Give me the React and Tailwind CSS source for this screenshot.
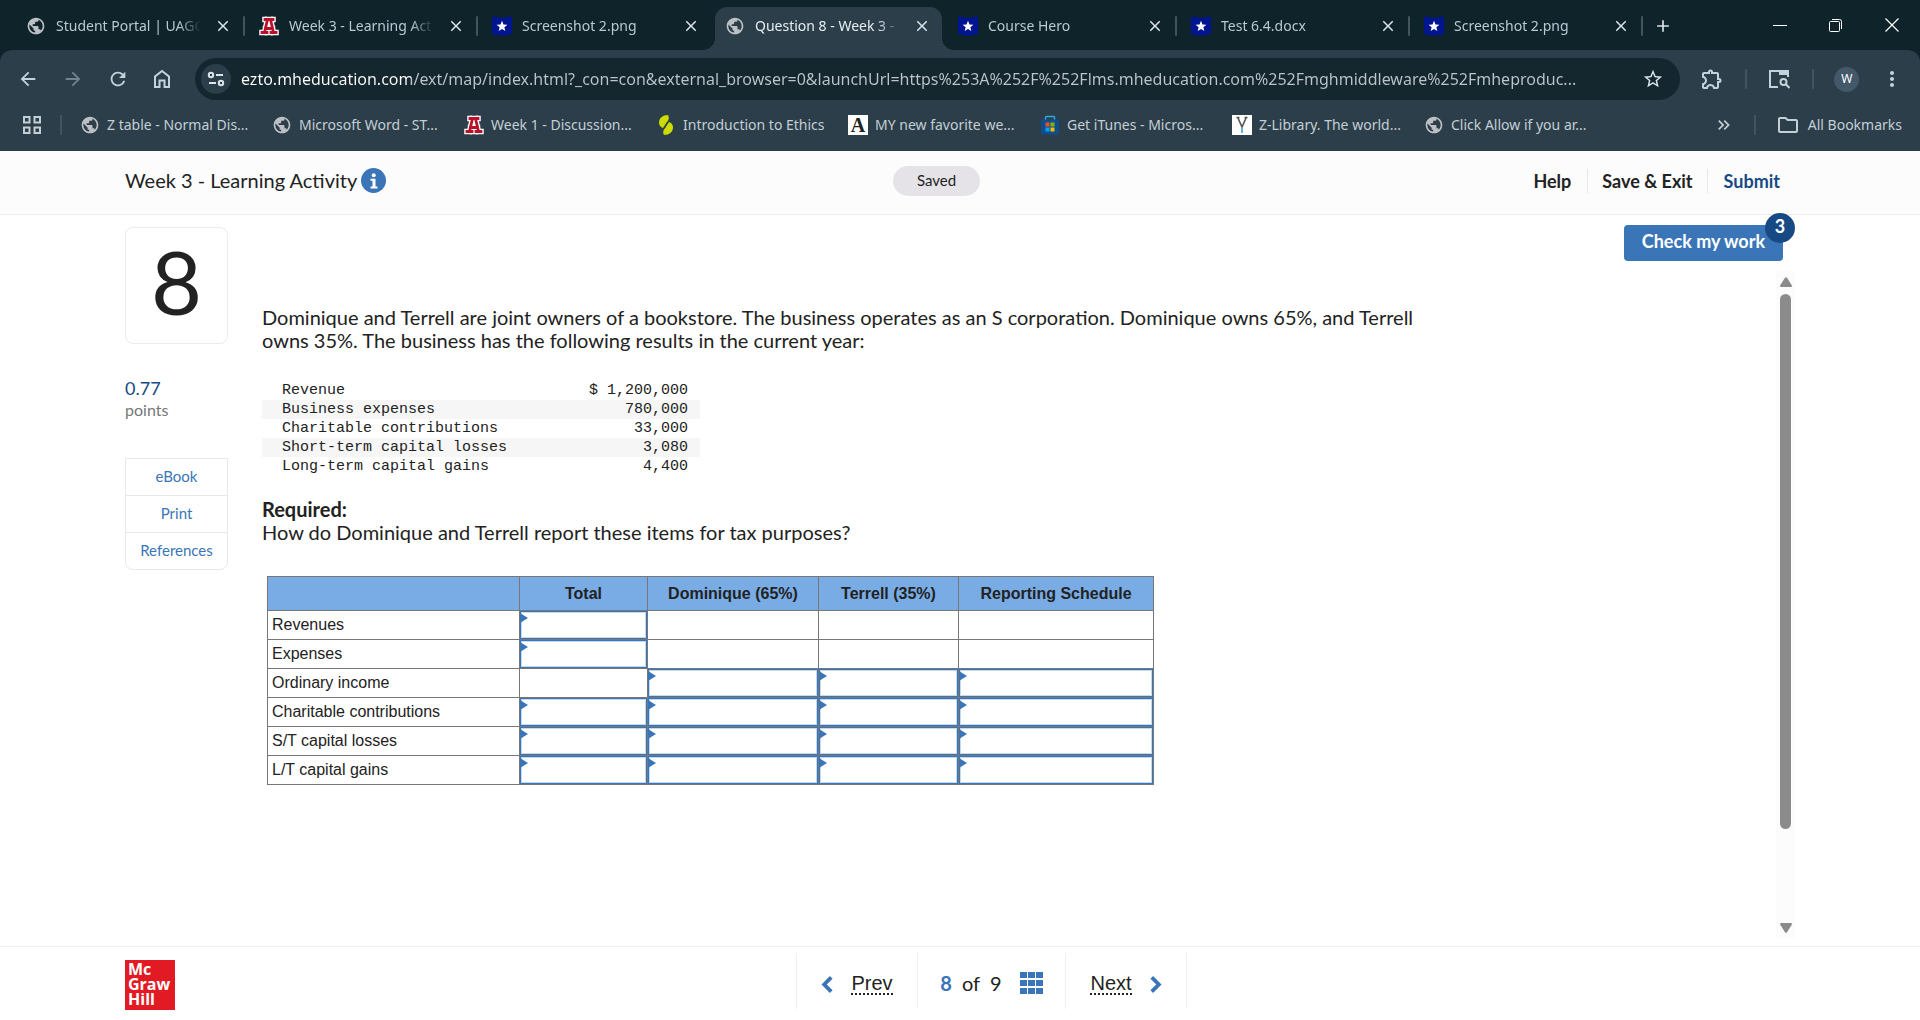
import clsx from 'clsx';
import {
  MdAdd,
  MdArrowBack,
  MdArrowForward,
  MdClose,
  MdKeyboardDoubleArrowRight,
  MdMoreVert,
  MdOutlineExtension,
  MdOutlineFolder,
  MdPublic,
  MdRefresh,
  MdStarBorder,
} from 'react-icons/md';

const tabs = [
  { icon: 'globe', title: 'Student Portal | UAGC' },
  { icon: 'arizona', title: 'Week 3 - Learning Act' },
  { icon: 'hero', title: 'Screenshot 2.png' },
  { icon: 'globe', title: 'Question 8 - Week 3 -', active: true },
  { icon: 'hero', title: 'Course Hero' },
  { icon: 'hero', title: 'Test 6.4.docx' },
  { icon: 'hero', title: 'Screenshot 2.png' },
];

const bookmarks = [
  { icon: 'globe', title: 'Z table - Normal Dis...' },
  { icon: 'globe', title: 'Microsoft Word - ST...' },
  { icon: 'arizona', title: 'Week 1 - Discussion...' },
  { icon: 'sophia', title: 'Introduction to Ethics' },
  { icon: 'letterA', title: 'MY new favorite we...' },
  { icon: 'store', title: 'Get iTunes - Micros...' },
  { icon: 'letterY', title: 'Z-Library. The world...' },
  { icon: 'globe', title: 'Click Allow if you ar...' },
];

const results = [
  ['Revenue', '$ 1,200,000'],
  ['Business expenses', '780,000'],
  ['Charitable contributions', '33,000'],
  ['Short-term capital losses', '3,080'],
  ['Long-term capital gains', '4,400'],
];

const columns = ['Total', 'Dominique (65%)', 'Terrell (35%)', 'Reporting Schedule'];

// 1 = the student can type in this cell
const answerRows = [
  { label: 'Revenues', cells: [1, 0, 0, 0] },
  { label: 'Expenses', cells: [1, 0, 0, 0] },
  { label: 'Ordinary income', cells: [0, 1, 1, 1], total: true },
  { label: 'Charitable contributions', cells: [1, 1, 1, 1] },
  { label: 'S/T capital losses', cells: [1, 1, 1, 1] },
  { label: 'L/T capital gains', cells: [1, 1, 1, 1] },
];

const url =
  'ezto.mheducation.com/ext/map/index.html?_con=con&external_browser=0&launchUrl=https%253A%252F%252Flms.mheducation.com%252Fmghmiddleware%252Fmheproduc...';

const arizonaShape = 'M6 3.500h8M8.500 3.500L5.500 16.500M11.500 3.500l3 13M3 16.500h5M12 16.500h5M6.500 12.500h7';

function Favicon({ name }) {
  switch (name) {
    case 'arizona':
      return (
        <svg viewBox="0 0 20 20" className="size-5 shrink-0" fill="none">
          <path d={arizonaShape} stroke="#fff" strokeWidth="5.500" strokeLinecap="square" />
          <path d={arizonaShape} stroke="#b8132b" strokeWidth="2.800" strokeLinecap="square" />
        </svg>
      );
    case 'hero':
      return (
        <svg viewBox="0 0 20 20" className="size-5 shrink-0">
          <path d="M0 0.500l10 1.500 10-1.500v17.500l-10 2-10-2z" fill="#00158f" />
          <path d="M10 4.800l1.500 3.600 3.900.3-3 2.500.9 3.800-3.300-2-3.300 2 .9-3.800-3-2.500 3.900-.3z" fill="#fff" />
        </svg>
      );
    case 'sophia':
      return (
        <svg viewBox="0 0 20 20" className="size-5 shrink-0">
          <path d="M12 0C6.500 0 3 3.500 3 7.500c0 2.800 1.600 4.800 4 5.500L11.500 4.500z" fill="#cddc00" />
          <path d="M8 20c5.500 0 9-3.500 9-7.500 0-2.800-1.600-4.800-4-5.500L8.500 15.500z" fill="#cddc00" />
          <path d="M12 0c1.500 2.500 1 5-1.500 7.500L7 13M8 20c-1.500-2.500-1-5 1.500-7.500L13 7" fill="#cddc00" />
        </svg>
      );
    case 'letterA':
      return (
        <span className="flex size-5 shrink-0 items-center justify-center bg-white font-['Liberation_Serif',serif] text-xl font-bold text-[#222]">
          A
        </span>
      );
    case 'letterY':
      return (
        <svg viewBox="0 0 20 20" className="size-5 shrink-0">
          <path d="M0 0h20v20H0z" fill="#fff" />
          <path d="M6 3l4 9 4-9M4.500 2.500h3M12.500 2.500h3" stroke="#555" strokeWidth="1.600" fill="none" />
          <path d="M10 13v5" stroke="#5bb8d6" strokeWidth="2" />
        </svg>
      );
    case 'store':
      return (
        <svg viewBox="0 0 20 20" className="size-5 shrink-0">
          <path d="M5.500 5V2.500a1 1 0 0 1 1-1h7a1 1 0 0 1 1 1V5" stroke="#2fa9e0" strokeWidth="1.500" fill="none" />
          <path d="M1 4.500h18V17a2.500 2.500 0 0 1-2.500 2.500h-13A2.500 2.500 0 0 1 1 17z" fill="#104d8d" />
          <path d="M5.500 7.500h4v4h-4z" fill="#f25022" />
          <path d="M10.500 7.500h4v4h-4z" fill="#7fba00" />
          <path d="M5.500 12.500h4v4h-4z" fill="#00a4ef" />
          <path d="M10.500 12.500h4v4h-4z" fill="#ffb900" />
        </svg>
      );
    default:
      return <MdPublic className="size-5 shrink-0 stroke-current text-[#bcc0c4]" />;
  }
}

function HomeIcon() {
  return (
    <svg viewBox="0 0 20 20" className="size-5" fill="none" stroke="currentColor" strokeWidth="2">
      <path d="M3 18V7.500L10 2l7 5.500V18h-4.500v-6.500h-5V18z" />
    </svg>
  );
}

function SiteIcon() {
  return (
    <svg viewBox="0 0 18 18" className="size-[18px]" fill="none" stroke="currentColor" strokeWidth="2">
      <circle cx="4" cy="5" r="2.200" />
      <path d="M9 5h7M2 13h7" />
      <circle cx="14" cy="13" r="2.200" />
    </svg>
  );
}

function TabSearchIcon() {
  return (
    <svg viewBox="0 0 24 24" className="size-6" fill="none" stroke="currentColor" strokeWidth="2">
      <path d="M11 20H3V4h18v6" />
      <path d="M12 3h9.500v5H12z" fill="currentColor" stroke="none" />
      <circle cx="16.500" cy="15" r="3" />
      <path d="M18.800 17.300L22.500 21" />
    </svg>
  );
}

function AppsIcon() {
  return (
    <svg viewBox="0 0 20 20" className="size-5" fill="none" stroke="currentColor" strokeWidth="2">
      <path d="M2 2h5.500v5.500H2zM12.500 2H18v5.500h-5.500zM2 12.500h5.500V18H2zM12.500 12.500H18V18h-5.500z" />
    </svg>
  );
}

function Divider() {
  return <span className="h-5 w-0.5 shrink-0 rounded bg-[#43545f]" />;
}

function Tab({ tab, divider }) {
  return (
    <div className={clsx('relative flex h-[43px] max-w-[233px] min-w-0 flex-1 items-center', tab.active && 'pr-0.5 pl-1')}>
      <div
        className={clsx(
          'relative flex h-full min-w-0 flex-1 items-center gap-2.5 pr-2 pb-1.5',
          tab.active ? 'rounded-t-xl bg-[#2c3e4a] pl-2.5 text-[#e6edf1]' : 'pl-3.5 text-[#b9c9d3]'
        )}
      >
        <Favicon name={tab.icon} />
        <a
          href="#"
          className="min-w-0 flex-1 overflow-hidden text-sm whitespace-nowrap [mask-image:linear-gradient(to_right,#000_84%,transparent)]"
        >
          {tab.title}
        </a>
        <button type="button" aria-label="Close tab" className="flex size-6 items-center justify-center text-[#dbe5eb]">
          <MdClose className="size-[18px]" />
        </button>
        {tab.active && (
          <>
            <span className="absolute bottom-0 -left-3 size-3 bg-[radial-gradient(circle_at_0_0,transparent_12px,#2c3e4a_12px)]" />
            <span className="absolute -right-3 bottom-0 size-3 bg-[radial-gradient(circle_at_100%_0,transparent_12px,#2c3e4a_12px)]" />
          </>
        )}
      </div>
      {divider && <span className="flex pb-1.5"><Divider /></span>}
    </div>
  );
}

function Browser() {
  return (
    <div className="bg-[#0f232b] font-['Noto_Sans',sans-serif] text-[#c3ced5]">
      {/* Tab strip */}
      <div className="flex h-[50px] items-end">
        <div className="flex min-w-0 flex-1 items-center pl-3">
          {tabs.map((tab, i) => (
            <Tab key={i} tab={tab} divider={![2, 3].includes(i)} />
          ))}
          <button type="button" aria-label="New tab" className="ml-1.5 px-1 pb-1.5 text-[#dbe5eb]">
            <MdAdd className="size-5" />
          </button>
        </div>
        <div className="flex h-full items-center text-white">
          <button type="button" aria-label="Minimize" className="flex w-14 justify-center">
            <span className="h-px w-3.5 bg-white" />
          </button>
          <button type="button" aria-label="Restore" className="flex w-14 justify-center">
            <svg viewBox="0 0 14 14" className="size-3.5" fill="none" stroke="currentColor">
              <rect x="0.500" y="3.500" width="10" height="10" rx="1" />
              <path d="M3 1.500h7.500a2 2 0 0 1 2 2V11" />
            </svg>
          </button>
          <button type="button" aria-label="Close window" className="flex w-14 justify-center">
            <svg viewBox="0 0 14 14" className="size-3.5" stroke="currentColor" strokeWidth="1.200">
              <path d="M.5.500l13 13M13.500.500l-13 13" />
            </svg>
          </button>
        </div>
      </div>

      <div className="rounded-t-xl bg-[#2c3e4a] pb-2.5">
        {/* Address bar */}
        <div className="flex h-[58px] items-center pr-4 pl-[13px]">
          <div className="flex w-[182px] shrink-0 gap-[15px] text-[#c3d3dc]">
            <button type="button" aria-label="Back" className="p-1"><MdArrowBack className="size-[22px]" /></button>
            <button type="button" aria-label="Forward" className="p-1 text-[#72838e]"><MdArrowForward className="size-[22px]" /></button>
            <button type="button" aria-label="Reload" className="p-1"><MdRefresh className="size-[22px]" /></button>
            <button type="button" aria-label="Home" className="p-1"><HomeIcon /></button>
          </div>
          <div className="flex h-[42px] min-w-0 flex-1 items-center rounded-full bg-[#14272f] pr-4 pl-1.5">
            <button type="button" aria-label="Site information" className="flex size-[30px] shrink-0 items-center justify-center rounded-full bg-[#2c3e4a] text-[#dbe5eb]">
              <SiteIcon />
            </button>
            <input
              type="text"
              aria-label="Address"
              defaultValue={url}
              className="ml-2.5 min-w-0 flex-1 bg-[linear-gradient(to_right,#ffffff_170px,#bcc5ca_170px)] bg-clip-text text-base text-transparent outline-none"
            />
            <button type="button" aria-label="Bookmark this page">
              <MdStarBorder className="size-[22px] text-[#dbe5eb]" />
            </button>
          </div>
          <div className="flex w-[224px] shrink-0 items-center justify-between pl-5 text-[#c3d3dc]">
            <button type="button" aria-label="Extensions"><MdOutlineExtension className="size-6" /></button>
            <Divider />
            <button type="button" aria-label="Search tabs"><TabSearchIcon /></button>
            <Divider />
            <button type="button" aria-label="Profile" className="size-[25px] rounded-full bg-[#43596a] text-xs text-white">W</button>
            <button type="button" aria-label="Menu"><MdMoreVert className="size-6" /></button>
          </div>
        </div>

        {/* Bookmarks */}
        <div className="flex h-[33px] items-center pr-[18px] pl-[22px] text-sm">
          <button type="button" aria-label="Apps"><AppsIcon /></button>
          <span className="flex w-[38px] justify-center"><Divider /></span>
          {bookmarks.map((mark) => (
            <a key={mark.title} href="#" className="flex w-48 min-w-0 items-center gap-[7px] whitespace-nowrap">
              <Favicon name={mark.icon} />
              {mark.title}
            </a>
          ))}
          <div className="ml-auto flex items-center gap-5">
            <button type="button" aria-label="More bookmarks"><MdKeyboardDoubleArrowRight className="size-5" /></button>
            <Divider />
            <a href="#" className="flex items-center gap-2 whitespace-nowrap">
              <MdOutlineFolder className="size-6" />
              All Bookmarks
            </a>
          </div>
        </div>
      </div>
    </div>
  );
}

function Header() {
  return (
    <header className="flex h-16 items-center border-b border-[#ececec] bg-[#fcfcfc] pr-[140px] pb-1 pl-[125px]">
      <div className="flex w-192 items-center gap-1">
        <h1 className="pb-0.5 text-xl">Week 3 - Learning Activity</h1>
        <button
          type="button"
          aria-label="Assignment information"
          className="flex size-[25px] items-center justify-center rounded-full bg-[#3a75b8] text-white"
        >
          <svg viewBox="0 0 10 16" className="h-4" fill="currentColor">
            <circle cx="4.700" cy="2.200" r="2" />
            <path d="M1.500 5.700h5v7.800h2V15.500h-7v-2h2V7.700h-2z" />
          </svg>
        </button>
      </div>
      <span className="rounded-full bg-[#e5e3e7] px-6 pt-[3px] pb-[5px] text-[15px] leading-[22px]">Saved</span>
      <nav className="ml-auto flex items-center text-lg leading-6 font-bold">
        <a href="#" className="pr-4">Help</a>
        <a href="#" className="border-x border-[#e8e8e8] px-3.5">Save &amp; Exit</a>
        <a href="#" className="pl-4 text-[#174a84]">Submit</a>
      </nav>
    </header>
  );
}

function Sidebar() {
  return (
    <aside className="w-[103px] shrink-0 pt-3">
      <div className="flex h-[117px] items-center justify-center rounded-lg border border-[#ebebeb] pb-2.5 text-[88px] leading-none">
        8
      </div>
      <p className="mt-8 text-lg leading-6 text-[#174a84]">0.77</p>
      <p className="text-base leading-5 text-[#777]">points</p>
      <ul className="mt-[38px] rounded-b-lg border border-[#e8e8e8] text-center text-[15px] text-[#3a75b8]">
        {['eBook', 'Print', 'References'].map((link) => (
          <li key={link} className="border-b border-[#e8e8e8] last:border-b-0">
            <a href="#" className="block pt-[7px] pb-[9px] leading-5">{link}</a>
          </li>
        ))}
      </ul>
    </aside>
  );
}

function AnswerTable() {
  return (
    <table className="mt-8 ml-[5px] w-[886px] table-fixed border-collapse font-['Liberation_Sans',Arial,sans-serif] text-base">
      <colgroup>
        <col className="w-[252px]" />
        <col className="w-[128px]" />
        <col className="w-[171px]" />
        <col className="w-[140px]" />
        <col className="w-[195px]" />
      </colgroup>
      <thead>
        <tr className="h-[34px] bg-[#79ace5]">
          <td className="border border-[#777]" />
          {columns.map((column) => (
            <th key={column} scope="col" className="border border-[#777] p-0">{column}</th>
          ))}
        </tr>
      </thead>
      <tbody>
        {answerRows.map((row) => (
          <tr key={row.label} className="h-[29px]">
            <th scope="row" className="border border-[#777] p-0 pl-1 text-left leading-6 font-normal">{row.label}</th>
            {row.cells.map((editable, i) => (
              <td
                key={i}
                className={clsx('relative border border-[#777] p-0', row.total && i === 0 && 'border-t-black')}
              >
                {editable === 1 && (
                  <>
                    <input
                      type="text"
                      aria-label={`${row.label}, ${columns[i]}`}
                      className="block h-7 w-full border border-[#3a75b8] px-2 inset-ring inset-ring-[#c5d9ef] outline-none"
                    />
                    <span className="absolute top-0.5 left-0 size-0 border-y-5 border-l-8 border-y-transparent border-l-[#3a75b8]" />
                  </>
                )}
              </td>
            ))}
          </tr>
        ))}
      </tbody>
    </table>
  );
}

function Question() {
  return (
    <section className="ml-[34px] min-w-0 flex-1 pt-[91px] text-xl leading-[23px]">
      <p className="max-w-[1180px]">
        Dominique and Terrell are joint owners of a bookstore. The business operates as an S corporation. Dominique owns
        65%, and Terrell owns 35%. The business has the following results in the current year:
      </p>
      <table className="mt-[29px] w-[438px] border-collapse font-['Liberation_Mono','Courier_New',monospace] text-[15px] leading-[19px]">
        <tbody>
          {results.map(([name, amount]) => (
            <tr key={name} className="even:bg-[#f6f6f6]">
              <th scope="row" className="p-0 pl-5 text-left font-normal">{name}</th>
              <td className="p-0 pr-3 text-right">{amount}</td>
            </tr>
          ))}
        </tbody>
      </table>
      <p className="mt-[22px] font-bold">Required:</p>
      <p>How do Dominique and Terrell report these items for tax purposes?</p>
      <AnswerTable />
    </section>
  );
}

function ScrollBar() {
  return (
    <div className="mt-2.5 flex w-[19px] flex-1 flex-col items-center bg-[#fcfcfc] pt-1.5 pb-[5px]">
      <svg viewBox="0 0 12 10" className="h-2.5 w-3" fill="#8b8b8b">
        <path d="M5 .8Q6-.4 7 .8L11.600 8Q12.500 9.800 11 10H1Q-.5 9.800.4 8z" />
      </svg>
      <div className="mt-[7px] w-full flex-1">
        <div className="mx-auto h-[85%] w-[11px] rounded-full bg-[#8b8b8b]" />
      </div>
      <svg viewBox="0 0 12 10" className="h-2.5 w-3 rotate-180" fill="#8b8b8b">
        <path d="M5 .8Q6-.4 7 .8L11.600 8Q12.500 9.800 11 10H1Q-.5 9.800.4 8z" />
      </svg>
    </div>
  );
}

function Footer() {
  return (
    <footer className="flex h-[74px] items-start border-t border-[#f0f0f0] px-[125px] text-xl">
      <div className="w-[671px] pt-[13px]">
        <p className="size-[50px] bg-[#e21a23] pt-0.5 pl-[3px] font-['Open_Sans',sans-serif] text-base leading-[15px] font-bold text-white">
          Mc
          <br />
          Graw
          <br />
          Hill
        </p>
      </div>
      <nav className="mt-1.5 flex h-14 divide-x divide-[#f0f0f0] border-x border-[#f0f0f0]">
        <a href="#" className="flex w-[121px] items-center justify-center gap-[18px] pt-1.5 font-['Liberation_Sans',Arial,sans-serif]">
          <svg viewBox="0 0 12 18" className="h-[17px] w-3" fill="none" stroke="#3a75b8" strokeWidth="4">
            <path d="M10.500 1.500L3 9l7.500 7.500" />
          </svg>
          <span className="border-b-2 border-dotted border-[#222] leading-5">Prev</span>
        </a>
        <div className="flex w-[148px] items-center justify-center gap-2.5 pt-1">
          <b className="text-[#3a75b8]">8</b>
          <span>of</span>
          <span>9</span>
          <button type="button" aria-label="Question list" className="ml-2">
            <svg viewBox="0 0 23 22" className="h-[22px] w-[23px]" fill="#3a75b8">
              <path d="M0 0h7v6H0zM8 0h7v6H8zM16 0h7v6h-7zM0 8h7v6H0zM8 8h7v6H8zM16 8h7v6h-7zM0 16h7v6H0zM8 16h7v6H8zM16 16h7v6h-7z" />
            </svg>
          </button>
        </div>
        <a href="#" className="flex w-[120px] items-center justify-center gap-[18px] pt-1.5 font-['Liberation_Sans',Arial,sans-serif]">
          <span className="border-b-2 border-dotted border-[#222] leading-5">Next</span>
          <svg viewBox="0 0 12 18" className="h-[17px] w-3" fill="none" stroke="#3a75b8" strokeWidth="4">
            <path d="M1.500 1.500L9 9l-7.500 7.500" />
          </svg>
        </a>
      </nav>
    </footer>
  );
}

export default function App() {
  return (
    <div className="flex min-h-screen flex-col bg-white font-[Lato,sans-serif] text-[#222]">
      <Browser />
      <Header />
      <main className="flex flex-1 px-[125px]">
        <Sidebar />
        <Question />
        <div className="flex flex-col items-end pt-2.5 pb-2">
          <button
            type="button"
            className="relative mr-3 h-9 rounded bg-[#3a75b8] px-[18px] pb-1 text-lg font-bold text-white"
          >
            Check my work
            <span className="absolute -top-3 -right-3 size-[30px] rounded-full bg-[#174a84] leading-[26px]">3</span>
          </button>
          <ScrollBar />
        </div>
      </main>
      <Footer />
    </div>
  );
}
